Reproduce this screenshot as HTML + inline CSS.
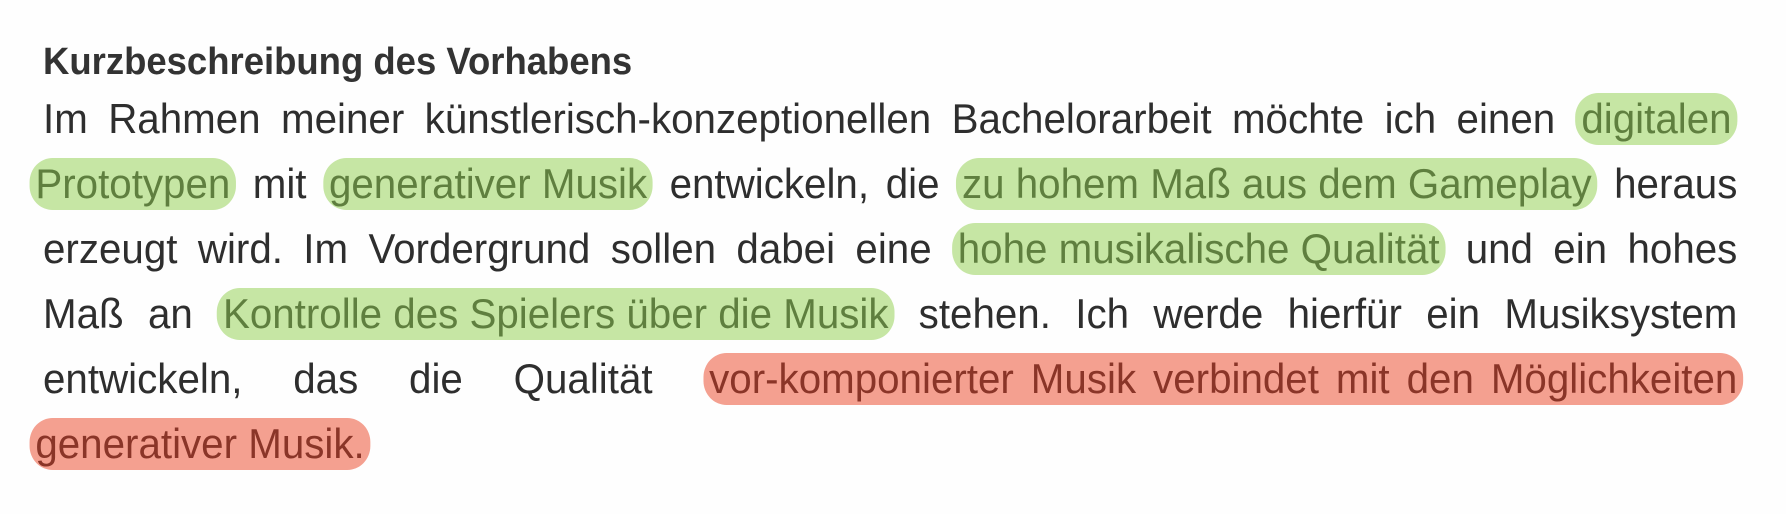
<!DOCTYPE html>
<html><head><meta charset="utf-8"><style>
html,body{margin:0;padding:0;background:#fefefe;width:1786px;height:514px;overflow:hidden}
.wrap{position:absolute;left:43px;top:37px;width:1765px;transform:scaleX(0.96);transform-origin:0 0;font-family:"Liberation Sans",sans-serif;color:#2e2e2e}
h1{margin:0;font-size:38px;line-height:50px;font-weight:bold;color:#333;height:49px}
.l{font-size:42px;line-height:65px;height:65px;white-space:nowrap;display:flex;justify-content:space-between;align-items:baseline}
.l.last{justify-content:flex-start}
.g{background:#c6e6a4;color:#5f7f3f;border-radius:24px;padding:2px 6px;line-height:48px}
.r{background:#f4a090;color:#8a3528;border-radius:24px;padding:2px 6px;line-height:48px}
</style></head><body>
<div class="wrap">
<h1>Kurzbeschreibung des Vorhabens</h1>
<div class="l"><span>Im</span><span>Rahmen</span><span>meiner</span><span>künstlerisch-konzeptionellen</span><span>Bachelorarbeit</span><span>möchte</span><span>ich</span><span>einen</span><span class="g">digitalen</span></div>
<div class="l"><span class="g" style="margin-left:-14px">Prototypen</span><span>mit</span><span class="g">generativer Musik</span><span>entwickeln,</span><span>die</span><span class="g">zu hohem Maß aus dem Gameplay</span><span>heraus</span></div>
<div class="l"><span>erzeugt</span><span>wird.</span><span>Im</span><span>Vordergrund</span><span>sollen</span><span>dabei</span><span>eine</span><span class="g">hohe musikalische Qualität</span><span>und</span><span>ein</span><span>hohes</span></div>
<div class="l"><span>Maß</span><span>an</span><span class="g">Kontrolle des Spielers über die Musik</span><span>stehen.</span><span>Ich</span><span>werde</span><span>hierfür</span><span>ein</span><span>Musiksystem</span></div>
<div class="l"><span>entwickeln,</span><span>das</span><span>die</span><span>Qualität</span><span class="r" style="word-spacing:6px;margin-right:-6px">vor-komponierter Musik verbindet mit den Möglichkeiten</span></div>
<div class="l last"><span style="width:0">&nbsp;</span><span class="r" style="margin-left:-14px">generativer Musik.</span></div>
</div>
</body></html>
